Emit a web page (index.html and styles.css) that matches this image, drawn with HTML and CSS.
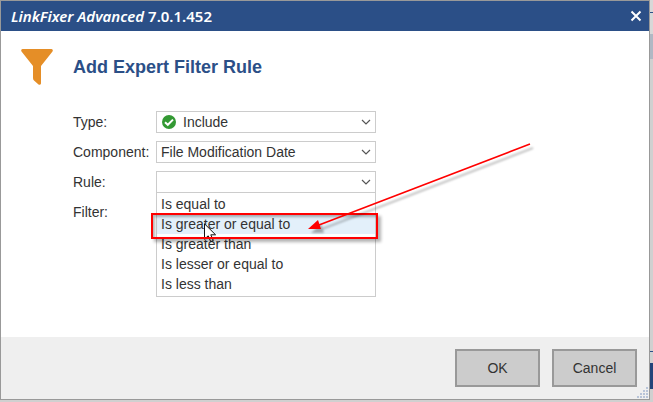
FILE: index.html
```html
<!DOCTYPE html>
<html lang="en">
<head>
    <meta charset="UTF-8">
    <meta name="viewport" content="width=device-width, initial-scale=1.0">
    <title>LinkFixer Advanced</title>
    <link rel="stylesheet" href="styles.css">
</head>
<body>
    <div class="dialog" role="dialog" aria-labelledby="dialog-title">
        <header class="title-bar">
            <span class="app-name"><em>LinkFixer Advanced</em> 7.0.1.452</span>
            <button class="close" type="button" aria-label="Close">
                <svg width="12" height="12" viewBox="0 0 12 12">
                    <path d="M1.5 1.5 L10.5 10.5 M10.5 1.5 L1.5 10.5" stroke="#fff" stroke-width="2"/>
                </svg>
            </button>
        </header>

        <main class="content">
            <svg class="funnel" width="32" height="36" viewBox="0 0 32 36">
                <path d="M1.5 0 H30.5 Q32.5 0.5 31.5 2.5 L20 17 V34.5 Q19.5 36.5 17.5 35.5 L13 31.5 Q12 30.5 12 29 V17 L0.5 2.5 Q-0.5 0.5 1.5 0 Z" fill="#e58e27"/>
            </svg>
            <div class="form">
                <h1 id="dialog-title">Add Expert Filter Rule</h1>
                <div class="fields">
                    <label for="type">Type:</label>
                    <div class="select-box">
                        <select id="type" class="with-icon">
                            <option>Include</option>
                            <option>Exclude</option>
                        </select>
                        <svg class="check" width="14" height="14" viewBox="0 0 14 14">
                            <circle cx="7" cy="7" r="7" fill="#339933"/>
                            <path d="M3 7.2 L5.8 9.8 L11 4.6" fill="none" stroke="#fff" stroke-width="2"/>
                        </svg>
                        <svg class="chevron" width="10" height="6" viewBox="0 0 10 6">
                            <path d="M1 1 L5 5 L9 1" fill="none" stroke="#555" stroke-width="1.2"/>
                        </svg>
                    </div>

                    <label for="component">Component:</label>
                    <div class="select-box">
                        <select id="component">
                            <option>File Modification Date</option>
                        </select>
                        <svg class="chevron" width="10" height="6" viewBox="0 0 10 6">
                            <path d="M1 1 L5 5 L9 1" fill="none" stroke="#555" stroke-width="1.2"/>
                        </svg>
                    </div>

                    <label for="rule">Rule:</label>
                    <div class="select-box">
                        <select id="rule">
                            <option></option>
                        </select>
                        <svg class="chevron" width="10" height="6" viewBox="0 0 10 6">
                            <path d="M1 1 L5 5 L9 1" fill="none" stroke="#555" stroke-width="1.2"/>
                        </svg>
                        <ul class="menu" role="listbox" aria-label="Rule">
                            <li role="option">Is equal to</li>
                            <li role="option" class="active" aria-selected="true">Is greater or equal to</li>
                            <li role="option">Is greater than</li>
                            <li role="option">Is lesser or equal to</li>
                            <li role="option">Is less than</li>
                        </ul>
                        <!-- mouse pointer, then the red box and arrow -->
                        <svg class="pointer" width="13" height="20" viewBox="0 0 13 20">
                            <path d="M0.5 0.8 V16.2 L4.2 12.8 L6.7 18.6 L9.3 17.5 L6.8 11.8 H11.6 Z" fill="#fff" stroke="#111" stroke-width="1"/>
                        </svg>
                        <div class="marker"></div>
                        <svg class="arrow" width="230" height="95" viewBox="0 0 230 95">
                            <path d="M223 3 L12 84" stroke="#f00" stroke-width="1.6"/>
                            <path d="M1 88 L11 79 L14 88 Z" fill="#f00"/>
                        </svg>
                    </div>

                    <span class="label">Filter:</span>
                </div>
            </div>
        </main>

        <footer class="buttons">
            <button type="button">OK</button>
            <button type="button">Cancel</button>
            <svg class="grip" width="12" height="12" viewBox="0 0 12 12">
                <path d="M9 0h2v2h-2z M6 3h2v2h-2z M9 3h2v2h-2z M3 6h2v2h-2z M6 6h2v2h-2z M9 6h2v2h-2z M0 9h2v2h-2z M3 9h2v2h-2z M6 9h2v2h-2z M9 9h2v2h-2z" fill="#b8c4d8"/>
            </svg>
        </footer>
    </div>
</body>
</html>
```

FILE: styles.css
```css
* {
    box-sizing: border-box;
}

body {
    display: flex;
    min-height: 100vh;
    margin: 0;
    padding: 0 3px 2px 0;
    font-family: "Liberation Sans", Arial, sans-serif;
    font-size: 14px;
    line-height: 20px;
    color: #333;
    /* the window behind the dialog */
    background: linear-gradient(#d8d8d8 12px, #2b4f87 12px, #2b4f87 13px, #d8d8d8 13px, #d8d8d8 34px,
        #b0b8c4 34px, #b0b8c4 59px, #d0d0d0 59px, #d0d0d0 351px, #2b4f87 351px, #2b4f87 352px,
        #d0d0d0 352px, #d0d0d0 363px, #23447a 363px, #23447a 389px, #d0d0d0 389px);
}

.dialog {
    display: flex;
    flex: 1;
    flex-direction: column;
    border: 1px solid #999;
    background: #fff;
}

.title-bar {
    display: flex;
    align-items: center;
    justify-content: space-between;
    height: 30px;
    padding: 0 7px 0 10px;
    background: #2b4f87;
    color: #fff;
}

.app-name {
    font-family: "Noto Sans", "Open Sans", sans-serif;
    font-size: 15px;
    font-weight: 600;
}

.close {
    display: flex;
    padding: 0;
    border: 0;
    background: none;
}

.content {
    display: flex;
    flex: 1;
    gap: 20px;
    padding: 18px 20px;
}

.form {
    flex: 1;
}

h1 {
    margin: 6px 0 32px;
    font-size: 18px;
    line-height: 24px;
    color: #2b4f87;
}

.fields {
    display: grid;
    grid-template-columns: 83px 220px;
    grid-auto-rows: 22px;
    row-gap: 8px;
    align-items: center;
}

.select-box {
    position: relative;
    height: 22px;
}

select {
    appearance: none;
    display: block;
    width: 100%;
    height: 22px;
    padding: 0 20px 0 4px;
    border: 1px solid #ccc;
    border-radius: 0;
    background: #fff;
    color: #333;
    font: inherit;
}

select.with-icon {
    padding-left: 26px;
}

.check {
    position: absolute;
    top: 4px;
    left: 6px;
}

.chevron {
    position: absolute;
    top: 8px;
    right: 5px;
}

.menu {
    position: absolute;
    top: 21px;
    left: 0;
    width: 100%;
    margin: 0;
    padding: 1px 0 2px;
    border: 1px solid #ccc;
    background: #fff;
    list-style: none;
}

.menu li {
    padding: 0 4px;
}

.menu .active {
    background: #e3f0fa;
}

.pointer {
    position: absolute;
    top: 52px;
    left: 48px;
}

.marker {
    position: absolute;
    top: 42px;
    left: -5px;
    width: 227px;
    height: 26px;
    border: 2px solid #f00;
    box-shadow: 3px 3px 3px rgba(0, 0, 0, 0.3), inset 2px 2px 3px rgba(0, 0, 0, 0.3);
}

.arrow {
    position: absolute;
    top: -30px;
    left: 151px;
    overflow: visible;
    filter: drop-shadow(3px 4px 1px rgba(0, 0, 0, 0.3));
}

.buttons {
    position: relative;
    display: flex;
    justify-content: flex-end;
    gap: 12px;
    padding: 12px;
    background: #efefef;
}

.buttons button {
    width: 85px;
    height: 38px;
    padding: 0;
    border: 2px solid #999;
    background: #ccc;
    color: #333;
    font: inherit;
}

.grip {
    position: absolute;
    right: 0;
    bottom: 0;
}
```
